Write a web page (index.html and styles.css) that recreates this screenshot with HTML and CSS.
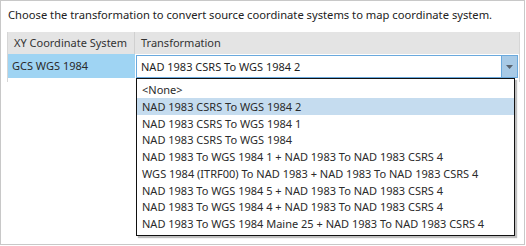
FILE: index.html
```html
<!DOCTYPE html>
<html>
<head>
<meta charset="utf-8">
<link rel="stylesheet" href="styles.css">
</head>
<body>
<div class="frame">
  <div class="prompt">Choose the transformation to convert source coordinate systems to map coordinate system.</div>
  <div class="grid">
    <div class="row head">
      <div class="c1">XY Coordinate System</div>
      <div class="c2">Transformation</div>
    </div>
    <div class="row data">
      <div class="c1 sel">GCS WGS 1984</div>
      <div class="c2 combo-cell">
        <div class="combo">
          <span class="combo-text">NAD 1983 CSRS To WGS 1984 2</span>
          <span class="combo-btn"><svg width="7" height="4" viewBox="0 0 7 4"><path d="M0 0H7L3.5 4Z" fill="#5a6470"/></svg></span>
        </div>
        <ul class="list">
          <li>&lt;None&gt;</li>
          <li class="hl">NAD 1983 CSRS To WGS 1984 2</li>
          <li>NAD 1983 CSRS To WGS 1984 1</li>
          <li>NAD 1983 CSRS To WGS 1984</li>
          <li>NAD 1983 To WGS 1984 1 + NAD 1983 To NAD 1983 CSRS 4</li>
          <li>WGS 1984 (ITRF00) To NAD 1983 + NAD 1983 To NAD 1983 CSRS 4</li>
          <li>NAD 1983 To WGS 1984 5 + NAD 1983 To NAD 1983 CSRS 4</li>
          <li>NAD 1983 To WGS 1984 4 + NAD 1983 To NAD 1983 CSRS 4</li>
          <li>NAD 1983 To WGS 1984 Maine 25 + NAD 1983 To NAD 1983 CSRS 4</li>
        </ul>
      </div>
    </div>
  </div>
</div>
</body>
</html>
```
FILE: styles.css
```css
html, body { margin: 0; padding: 0; background: #fff; }
body {
  font-family: "Noto Sans", "Open Sans", sans-serif;
  font-size: 11px;
  color: #262626;
}
.frame {
  box-sizing: border-box;
  width: 525px;
  height: 245px;
  border: 1px solid #c8c8c8;
  padding: 0 0 0 6px;
}
.prompt {
  margin-left: 1px;
  height: 31px;
  line-height: 28px;
  font-size: 11.2px;
  color: #222;
  white-space: nowrap;
}
.grid {
  width: 511px;
  height: 50px;
  border-left: 1px solid #d6d6d6;
  border-right: 1px solid #d6d6d6;
}
.row { display: flex; white-space: nowrap; }
.head { height: 22px; background: #e4e4e4; line-height: 22px; color: #333; }
.head .c1 { width: 127px; border-right: 1px solid #d0d0d0; padding-left: 6px; box-sizing: border-box; }
.head .c2 { padding-left: 6px; }
.data { height: 24px; }
.data .c1 {
  width: 127px; box-sizing: border-box;
  background: #9fd4f3;
  padding-left: 4px;
  line-height: 24px;
  color: #2a2a2a;
}
.combo-cell { position: relative; flex: 1; padding: 1px 1px 0 1px; }
.combo {
  box-sizing: border-box;
  width: 382px;
  height: 23px;
  border: 1px solid #6aa9dd;
  display: flex;
  align-items: stretch;
  background: #fff;
}
.combo-text { flex: 1; padding-left: 4px; line-height: 21px; color: #1e1e1e; }
.combo-btn {
  width: 15px;
  background: #a8cae6;
  border-left: 1px solid #6aa9dd;
  display: flex; align-items: center; justify-content: center;
}
.list {
  position: absolute;
  left: 1px; top: 24px;
  width: 379px;
  margin: 0; padding: 2px 0 3px 0;
  list-style: none;
  background: #fff;
  border: 1px solid #111;
  box-shadow: 2px 2px 1px rgba(0,0,0,0.25);
  box-sizing: border-box;
}
.list li {
  height: 16.75px;
  line-height: 17px;
  padding-left: 5px;
  white-space: nowrap;
  color: #2b2b2b;
}
.list li.hl { background: #c5dcef; }
```
